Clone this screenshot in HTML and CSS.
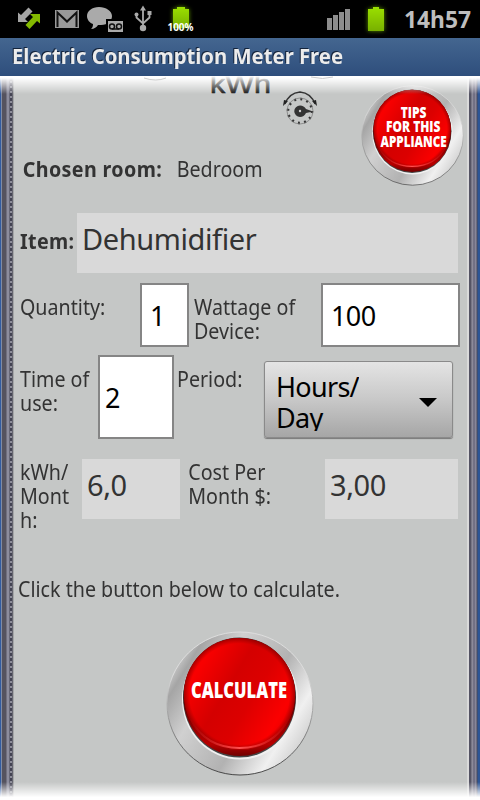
FILE: index.html
```html
<!DOCTYPE html>
<html lang="en">
<head>
  <meta charset="UTF-8">
  <meta name="viewport" content="width=device-width, initial-scale=1.0">
  <title>Electric Consumption Meter Free</title>
  <link rel="stylesheet" href="styles.css">
</head>
<body>
  <div class="statusbar">
    <svg width="210" height="38" viewBox="0 0 210 38">
      <defs>
        <linearGradient id="bat" x1="0" y1="0" x2="0" y2="1">
          <stop offset="0" stop-color="#9be000"/>
          <stop offset="1" stop-color="#78b000"/>
        </linearGradient>
      </defs>
      <path d="M18 22V12.500l3 2.500 7.500-7.500 4 4L25 19l3 3z" fill="#a5a5a5"/>
      <path d="M40 14v9.500L37 21l-7.500 8-4-4 7.500-8-3-3z" fill="#83b900"/>
      <rect x="55" y="10" width="24" height="18" fill="#999"/>
      <path d="M57.500 27V12.500L67 21.500l9.500-9V27" fill="none" stroke="#111" stroke-width="2"/>
      <path d="M99 7c-7 0-12 4-12 9 0 4 3 7 6 8 0 3-1 4-2 5 3 0 6-2 7-4h3c7 0 11-4 11-9s-6-9-13-9z" fill="#aaa"/>
      <rect x="107" y="20" width="17" height="13" fill="#aaa" stroke="#000" stroke-width="2"/>
      <g fill="none" stroke="#111" stroke-width="1.500">
        <circle cx="112" cy="26.500" r="2.500"/>
        <circle cx="119" cy="26.500" r="2.500"/>
        <path d="M112 29h7"/>
      </g>
      <path d="M143 9v19M136.500 14v3.500l6.500 6 6.500-6V13" fill="none" stroke="#aaa" stroke-width="1.800"/>
      <path d="M143 5.500l3 5h-6zM147.500 11h4v4h-4z" fill="#aaa"/>
      <circle cx="136.500" cy="14.500" r="2" fill="#aaa"/>
      <circle cx="143" cy="28" r="3.200" fill="#aaa"/>
      <path class="glow" d="M173 9h4V7h8v2h4v19h-16z" fill="url(#bat)"/>
      <text x="167.500" y="31" textLength="26" lengthAdjust="spacingAndGlyphs" class="percent">100%</text>
    </svg>
    <div class="right">
      <svg width="62" height="38" viewBox="0 0 62 38">
        <path d="M0 18h5v12H0zM6 15h5v15H6zM12 12h5v18h-5zM18 9h5v21h-5z" fill="#8d8d8d"/>
        <path class="glow" d="M41 9h5V7h6v2h5v22H41z" fill="url(#bat)"/>
      </svg>
      <svg width="79" height="38" viewBox="0 0 79 38">
        <text x="3" y="28" textLength="67" lengthAdjust="spacingAndGlyphs" class="clock">14h57</text>
      </svg>
    </div>
  </div>

  <div class="titlebar">
    <svg width="480" height="38" viewBox="0 0 480 38">
      <text x="12" y="26" textLength="331" lengthAdjust="spacingAndGlyphs" class="app-title">Electric Consumption Meter Free</text>
    </svg>
  </div>

  <main>
    <header class="top">
      <svg class="logo" width="200" height="60" viewBox="0 0 200 60">
        <defs>
          <linearGradient id="kwh" gradientUnits="userSpaceOnUse" x1="0" y1="0" x2="0" y2="17">
            <stop offset="0" stop-color="#fff"/>
            <stop offset=".3" stop-color="#aaa"/>
            <stop offset="1" stop-color="#222"/>
          </linearGradient>
        </defs>
        <text x="74" y="17" textLength="61" lengthAdjust="spacingAndGlyphs" class="kwh">kWh</text>
        <path d="M8 2q12 4 22 0M175 1q12 3 22 0" fill="none" stroke="#ccc"/>
        <circle cx="164" cy="35" r="12" fill="none" stroke="#333" stroke-width="2.500" stroke-dasharray="2 4.280"/>
        <circle cx="164" cy="35" r="13" fill="none" stroke="#777" stroke-width=".7"/>
        <path d="M149 28q4-11 15-12 11 1 15 12" fill="none" stroke="#333" stroke-width="1.300"/>
        <path d="M147 30l1-6 4 1zM181 30l-1-6-4 1z" fill="#222"/>
        <path d="M164 29.500q4 0 6 3.500l7 2.500-7 1.500q-2 4-6 4a5.500 5.500 0 0 1 0-11.500z" fill="#333"/>
        <circle cx="164" cy="35" r="1.200" fill="#ccc"/>
      </svg>
      <button class="round">
        <svg width="103" height="103" viewBox="0 0 148 148">
          <use href="#dome"/>
          <g class="button-text">
            <text x="57" y="47" textLength="37" lengthAdjust="spacingAndGlyphs">TIPS</text>
            <text x="36" y="68" textLength="78" lengthAdjust="spacingAndGlyphs">FOR THIS</text>
            <text x="28" y="89" textLength="95" lengthAdjust="spacingAndGlyphs">APPLIANCE</text>
          </g>
        </svg>
      </button>
      <div class="room"><b>Chosen room:</b><span>Bedroom</span></div>
    </header>

    <div class="row item">
      <label><b>Item:</b></label>
      <div class="output big">Dehumidifier</div>
    </div>

    <div class="row quantity">
      <label>Quantity:</label>
      <div class="field one">1</div>
      <label>Wattage of<br>Device:</label>
      <div class="field watts">100</div>
    </div>

    <div class="row time">
      <label>Time of<br>use:</label>
      <div class="field hours">2</div>
      <label>Period:</label>
      <div class="select"><div>Hours/<br>Day</div>
        <svg width="18" height="10" viewBox="0 0 18 10"><path d="M0 0h18L9 9z"/></svg>
      </div>
    </div>

    <div class="row result">
      <label>kWh/<br>Mont<br>h:</label>
      <div class="output">6,0</div>
      <label>Cost Per<br>Month $:</label>
      <div class="output">3,00</div>
    </div>

    <p class="note">Click the button below to calculate.</p>

    <button class="round calc">
      <svg width="148" height="148" viewBox="0 0 148 148">
        <defs>
          <linearGradient id="metal" x1="0" y1=".2" x2="1" y2=".8">
            <stop offset="0" stop-color="#e4e4e4"/>
            <stop offset=".12" stop-color="#a5a5a5"/>
            <stop offset=".3" stop-color="#d0d0d0"/>
            <stop offset=".6" stop-color="#b2b2b2"/>
            <stop offset=".82" stop-color="#f0f0f0"/>
            <stop offset="1" stop-color="#c4c4c4"/>
          </linearGradient>
          <linearGradient id="edge" x1="0" y1="0" x2="0" y2="1">
            <stop offset=".3" stop-color="#ddd"/>
            <stop offset="1" stop-color="#444"/>
          </linearGradient>
          <linearGradient id="red" x1="0" y1=".2" x2="1" y2=".8">
            <stop offset="0" stop-color="#e80000"/>
            <stop offset=".13" stop-color="#f90000"/>
            <stop offset=".4" stop-color="#d40000"/>
            <stop offset=".6" stop-color="#dc0000"/>
            <stop offset=".85" stop-color="#fb0000"/>
            <stop offset="1" stop-color="#e00000"/>
          </linearGradient>
          <radialGradient id="shade">
            <stop offset=".9" stop-color="#800000" stop-opacity="0"/>
            <stop offset="1" stop-color="#700000" stop-opacity=".6"/>
          </radialGradient>
          <linearGradient id="rim" x1="0" y1="0" x2="0" y2="1">
            <stop offset=".5" stop-color="#500"/>
            <stop offset=".9" stop-color="#b80000"/>
            <stop offset="1" stop-color="#700000"/>
          </linearGradient>
          <linearGradient id="shine" gradientUnits="userSpaceOnUse" x1="24" y1="0" x2="123" y2="0">
            <stop offset="0" stop-color="#f33" stop-opacity="0"/>
            <stop offset=".5" stop-color="#ff5050"/>
            <stop offset="1" stop-color="#f33" stop-opacity="0"/>
          </linearGradient>
          <g id="dome">
            <ellipse cx="74" cy="72.500" rx="73" ry="71.500" fill="url(#metal)" stroke="url(#edge)" stroke-width="1"/>
            <ellipse cx="74" cy="68.500" rx="58" ry="60" fill="#f0f0f0"/>
            <ellipse cx="73.500" cy="66.500" rx="56.500" ry="60" fill="#444"/>
            <ellipse cx="73.500" cy="66" rx="56" ry="59" fill="url(#rim)"/>
            <ellipse cx="73.500" cy="63" rx="55.500" ry="56" fill="url(#red)"/>
            <ellipse cx="73.500" cy="63" rx="55.500" ry="56" fill="url(#shade)"/>
            <path d="M24 88q16 29 49.500 29T123 88" fill="none" stroke="url(#shine)" stroke-width="2"/>
          </g>
        </defs>
        <use href="#dome"/>
        <text x="25" y="67" textLength="96" lengthAdjust="spacingAndGlyphs" class="button-text">CALCULATE</text>
      </svg>
    </button>
  </main>
</body>
</html>
```
FILE: styles.css
```css
* {
  margin: 0;
  padding: 0;
  box-sizing: border-box;
}

body {
  width: 480px;
  height: 800px;
  overflow: hidden;
  font-family: "Noto Sans", "Open Sans", sans-serif;
  color: #333;
  background: #000;
}

svg {
  display: block;
}

.statusbar {
  height: 38px;
  display: flex;
  justify-content: space-between;
  background: #000;
}

.right {
  display: flex;
  gap: 12px;
}

.glow {
  filter: drop-shadow(0 0 2px #5c9000);
}

.percent {
  font-size: 11px;
  font-weight: bold;
  fill: #fff;
}

.clock {
  font-size: 24px;
  font-weight: bold;
  fill: #bebebe;
}

.titlebar {
  height: 38px;
  background: linear-gradient(#446690, #2e4e7c);
}

.app-title {
  font-size: 21px;
  font-weight: bold;
  fill: #ececec;
  filter: drop-shadow(-1px -1px 0 #14243c);
}

main {
  position: relative;
  height: 724px;
  padding: 0 20px;
  overflow: hidden;
  background:
    repeating-linear-gradient(rgba(190, 190, 200, .6) 0 2px, transparent 2px 5px) 10px 0 / 2px 100% no-repeat,
    linear-gradient(90deg, #315ba0 0 1px, #7f8ba4 1px 2px, #55535f 2px 6px, #8d8d9d 7px 9px, #444453 10px 12px, #85868a 13px, #c5c7c6 14px 467px, #dadada 467px 469px, #555464 469px 471px, #9997a5 472px, #66657a 474px, #9391a3 476px, #464656 477px, #2c5596 478px);
}

/* fading edges of the scroll area */
main::before,
main::after {
  content: "";
  position: absolute;
  left: 0;
  right: 0;
  height: 18px;
}

main::before {
  top: 0;
  background: linear-gradient(#fff 10%, rgba(255, 255, 255, 0));
}

main::after {
  bottom: 0;
  background: linear-gradient(rgba(255, 255, 255, 0), #fff 85%);
}

.top {
  height: 137px;
  display: grid;
  grid-template-columns: 341px 103px;
  grid-template-rows: 81px 56px;
}

.logo {
  margin-left: 116px;
  z-index: 1;
}

.kwh {
  font-family: "Liberation Sans", sans-serif;
  font-size: 25px;
  fill: url(#kwh);
  stroke: url(#kwh);
  stroke-width: .5;
}

.round {
  border: none;
  background: none;
  cursor: pointer;
}

.top .round {
  grid-column: 2;
  grid-row: 1 / 3;
  align-self: start;
  margin-top: 9px;
}

.button-text {
  font-family: "Open Sans", sans-serif;
  font-size: 23px;
  font-weight: 800;
  fill: #fff;
}

.room {
  grid-column: 1;
  grid-row: 2;
  padding-left: 3px;
  display: flex;
  gap: 16px;
}

/* narrow label text */
label,
.room,
.note {
  font-size: 21.500px;
  line-height: 24px;
  white-space: nowrap;
  transform: scaleX(.915);
  transform-origin: left;
}

b {
  letter-spacing: .4px;
}

.row {
  display: grid;
  align-items: start;
}

.row label {
  padding-top: 12px;
}

.item {
  height: 70px;
  grid-template-columns: 57px 381px;
}

.item label {
  padding-top: 16px;
}

.output {
  height: 60px;
  padding: 5px;
  background: #d9d9d9;
  font-size: 29px;
  line-height: 42px;
  letter-spacing: -.4px;
}

.quantity {
  height: 72px;
  grid-template-columns: 120px 54px 127px 139px;
}

.field {
  display: flex;
  align-items: center;
  border: 2px solid #858585;
  background: #fff;
  color: #000;
  font-size: 27px;
  letter-spacing: -.6px;
}

.one {
  width: 49px;
  height: 64px;
  padding-left: 8px;
}

.watts {
  height: 64px;
  padding-left: 8px;
}

.time {
  height: 104px;
  grid-template-columns: 78px 79px 87px 189px;
}

.hours {
  width: 76px;
  height: 84px;
  padding-left: 5px;
}

.select {
  height: 77px;
  margin-top: 6px;
  padding: 9px 15px 7px 11px;
  display: flex;
  align-items: center;
  justify-content: space-between;
  border: 1px solid #8a8a8a;
  border-radius: 3px;
  background: linear-gradient(#e4e4e4, #c8c8c8 50%, #a6a6a6);
  box-shadow: 0 1px 1px #777;
  color: #000;
  font-size: 27px;
  line-height: 31px;
  letter-spacing: -.7px;
}

.select div {
  height: 60px;
  overflow: hidden;
}

.select svg {
  margin-top: 4px;
}

.result {
  height: 118px;
  grid-template-columns: 62px 98px 145px 133px;
}

.result label {
  padding-top: 1px;
}

.result label:nth-child(3) {
  padding-left: 9px;
}

.note {
  height: 54px;
  margin-left: -2px;
}

.calc {
  width: 148px;
  display: block;
  margin: 0 0 0 146px;
}
```
